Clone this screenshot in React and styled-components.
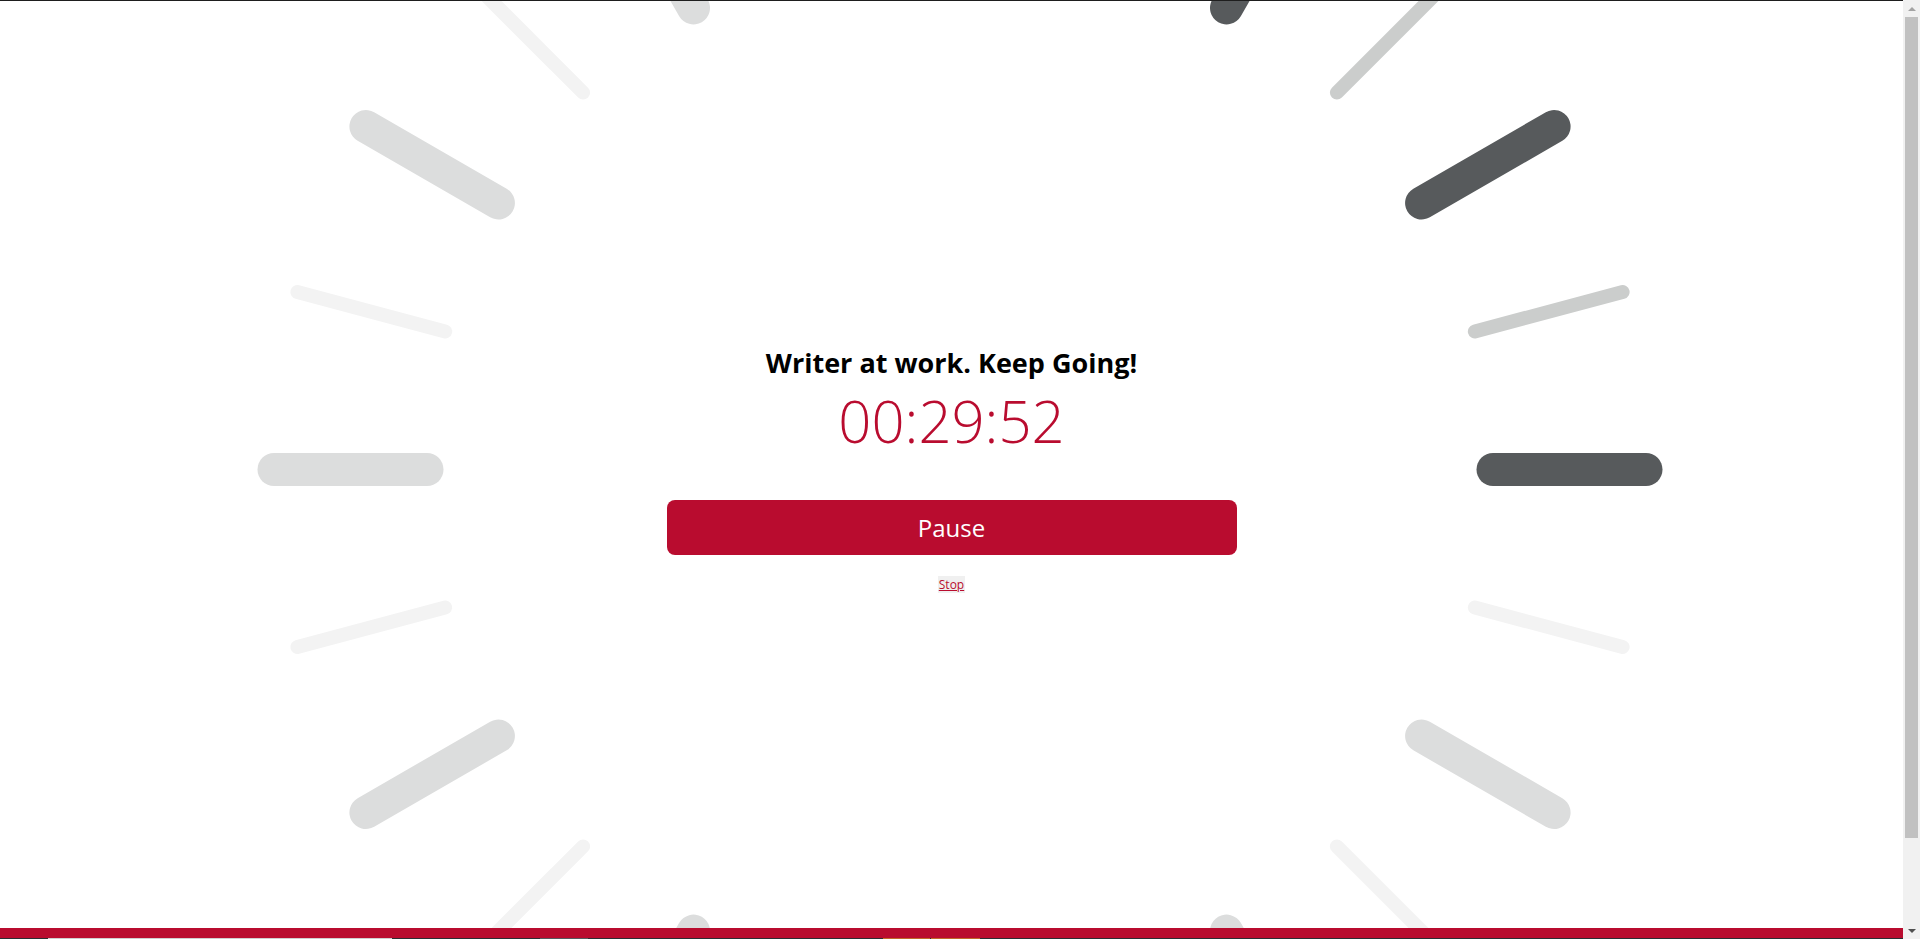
import React from 'react';
import styled, { createGlobalStyle } from 'styled-components';

const RED = '#b90c2f';

const GlobalStyle = createGlobalStyle`
  html, body {
    margin: 0;
    padding: 0;
    height: 100%;
    overflow: hidden;
    background: #fff;
    font-family: "Open Sans", "Liberation Sans", sans-serif;
  }
  #root {
    height: 100%;
  }
`;

// Layout shell: page on the left, scrollbar column on the right
const Shell = styled.div`
  display: flex;
  height: 100vh;
`;

const Page = styled.div`
  flex: 1;
  min-width: 0;
  display: flex;
  flex-direction: column;
  overflow: hidden;
`;

const TopRule = styled.div`
  flex-shrink: 0;
  height: 1px;
  background: #1e1e1e;
`;

const Stage = styled.main`
  position: relative;
  flex-shrink: 0;
  height: 927px;
  display: flex;
  align-items: center;
  justify-content: center;
  overflow: hidden;
`;

const Spinner = styled.svg`
  position: absolute;
  left: 0;
  top: -1px;
  width: 1920px;
  height: 939px;
  pointer-events: none;
`;

const Panel = styled.section`
  position: relative;
  z-index: 1;
  width: 570px;
  display: flex;
  flex-direction: column;
  align-items: center;
  padding-top: 8px;
`;

const Title = styled.h1`
  margin: 0;
  font-size: 27px;
  font-weight: 700;
  line-height: 38px;
  color: #000;
`;

const Clock = styled.div`
  margin-top: 9px;
  font-size: 58px;
  font-weight: 300;
  line-height: 60px;
  color: ${RED};
`;

const PauseButton = styled.button`
  margin-top: 49px;
  width: 100%;
  height: 55px;
  border: none;
  border-radius: 8px;
  background: ${RED};
  color: #fff;
  font-family: inherit;
  font-size: 24px;
  cursor: pointer;
`;

const StopButton = styled.button`
  margin-top: 21px;
  padding: 0 1px;
  border: none;
  background: #f0f0f0;
  color: ${RED};
  font-family: inherit;
  font-size: 12px;
  line-height: 17px;
  text-decoration: underline;
  cursor: pointer;
`;

const Footer = styled.footer`
  flex-shrink: 0;
  height: 110px;
  border-top: 10px solid ${RED};
  background: #2b2f33;
  display: flex;
  align-items: flex-start;
  padding-left: 48px;
`;

const FooterBlock = styled.div`
  height: 30px;
  width: ${(p) => p.$w}px;
  margin-left: ${(p) => p.$gap || 0}px;
  background: ${(p) => p.$color};
`;

const ScrollBar = styled.div`
  width: 17px;
  flex-shrink: 0;
  background: #f1f1f1;
  display: flex;
  flex-direction: column;
`;

const Arrow = styled.div`
  height: 17px;
  display: flex;
  align-items: center;
  justify-content: center;
  &::after {
    content: '';
    border-left: 4px solid transparent;
    border-right: 4px solid transparent;
    ${(p) => (p.$down
      ? `border-top: 4px solid #505050;`
      : `border-bottom: 4px solid #a3a3a3;`)}
  }
`;

const Track = styled.div`
  flex: 1;
  padding: 0 2px;
`;

const Thumb = styled.div`
  height: 821px;
  background: #c1c1c1;
`;

// Spokes of the loading wheel
const CX = 960;
const CY = 469.5;
const R1 = 533;
const R2 = 686;

const spokeColor = (deg, thick) => {
  if (thick) return [0, 300, 330, 270].includes(deg) ? '#575a5c' : '#dcdddd';
  return [285, 315, 345].includes(deg) ? '#cbcdcc' : '#f3f3f3';
};

const spokes = Array.from({ length: 24 }, (_, i) => {
  const deg = i * 15;
  const thick = i % 2 === 0;
  const a = (deg * Math.PI) / 180;
  return {
    deg,
    x1: CX + Math.cos(a) * R1,
    y1: CY + Math.sin(a) * R1,
    x2: CX + Math.cos(a) * R2,
    y2: CY + Math.sin(a) * R2,
    width: thick ? 33 : 14,
    color: spokeColor(deg, thick),
  };
});

const App = () => (
  <>
    <GlobalStyle />
    <Shell>
      <Page>
        <TopRule />
        <Stage>
          <Spinner viewBox="0 0 1920 939">
            {spokes.map((s) => (
              <line
                key={s.deg}
                x1={s.x1}
                y1={s.y1}
                x2={s.x2}
                y2={s.y2}
                stroke={s.color}
                strokeWidth={s.width}
                strokeLinecap="round"
              />
            ))}
          </Spinner>
          <Panel>
            <Title>Writer at work. Keep Going!</Title>
            <Clock>00:29:52</Clock>
            <PauseButton type="button">Pause</PauseButton>
            <StopButton type="button">Stop</StopButton>
          </Panel>
        </Stage>
        <Footer>
          <FooterBlock $w={344} $color="#cfcfcf" />
          <FooterBlock $w={48} $gap={148} $color="#555a5e" />
          <FooterBlock $w={47} $gap={295} $color="#c0692a" />
          <FooterBlock $w={49} $gap={1} $color="#c0692a" />
        </Footer>
      </Page>
      <ScrollBar>
        <Arrow />
        <Track>
          <Thumb />
        </Track>
        <Arrow $down />
      </ScrollBar>
    </Shell>
  </>
);

export default App;
